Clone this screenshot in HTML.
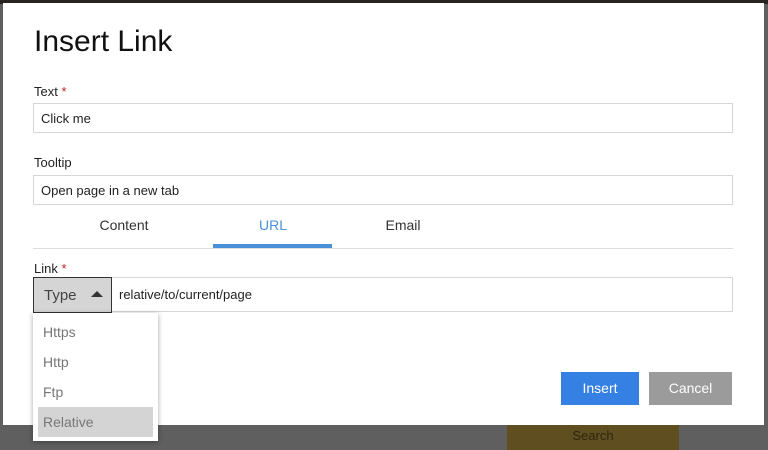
<!DOCTYPE html>
<html><head><style>
*{box-sizing:border-box;margin:0;padding:0}
body{width:768px;height:446px;overflow:hidden;background:#5f5f5f;font-family:"Liberation Sans","DejaVu Sans",sans-serif;position:relative}
.top{position:absolute;left:0;top:0;width:768px;height:4px;background:#2a2420}
.search{position:absolute;left:507px;top:420px;width:172px;height:30px;background:#5f4e20;color:#2e260c;font-size:13px;text-align:center;padding-top:8px}
.dlg{position:absolute;left:3px;top:3px;width:761px;height:422px;background:#fff}
.a{position:absolute}
h1{position:absolute;left:31px;top:22px;font-size:30px;font-weight:normal;color:#111}
.lbl{font-size:13px;color:#222}
.req{color:#b22}
.inp{border:1px solid #d6d6d6;background:#fff;font-size:13px;color:#222;padding-left:7px;display:flex;align-items:center}
.tab{font-size:14px;color:#333;width:120px;text-align:center}
.dd{position:absolute;left:30px;top:310px;width:125px;height:128px;background:#fff;box-shadow:0 1px 5px rgba(0,0,0,.35);padding:4px 5px}
.it{height:30px;line-height:30px;padding-left:5px;font-size:14px;color:#777}
.btn{position:absolute;top:369px;height:33px;color:#fff;font-size:14px;text-align:center;line-height:33px}
</style></head><body>
<div class="top"></div>
<div class="search">Search</div>
<div class="dlg">
<h1>Insert Link</h1>
<div class="a lbl" style="left:31px;top:81px">Text <span class="req">*</span></div>
<div class="a inp" style="left:30px;top:100px;width:700px;height:30px">Click me</div>
<div class="a lbl" style="left:31px;top:152px">Tooltip</div>
<div class="a inp" style="left:30px;top:172px;width:700px;height:30px">Open page in a new tab</div>
<div class="a tab" style="left:61px;top:214px">Content</div>
<div class="a tab" style="left:210px;top:214px;color:#4a90d9">URL</div>
<div class="a tab" style="left:340px;top:214px">Email</div>
<div class="a" style="left:210px;top:241px;width:119px;height:4px;background:#4a90d9"></div>
<div class="a" style="left:30px;top:245px;width:700px;height:1px;background:#ddd"></div>
<div class="a lbl" style="left:31px;top:258px">Link <span class="req">*</span></div>
<div class="a inp" style="left:30px;top:274px;width:700px;height:35px;padding-left:85px">relative/to/current/page</div>
<div class="a" style="left:30px;top:274px;width:79px;height:36px;background:#d5d5d5;border:1px solid #333;font-size:15px;color:#444;padding:9px 0 0 10px">Type <span style="display:inline-block;margin-left:10px;width:0;height:0;border-left:6px solid transparent;border-right:6px solid transparent;border-bottom:6px solid #333;vertical-align:3px"></span></div>
<div class="dd">
<div class="it">Https</div><div class="it">Http</div><div class="it">Ftp</div><div class="it" style="background:#d4d4d4">Relative</div>
</div>
<div class="btn" style="left:558px;width:78px;background:#3580e3">Insert</div>
<div class="btn" style="left:646px;width:83px;background:#9b9b9b">Cancel</div>
</div>
</body></html>
